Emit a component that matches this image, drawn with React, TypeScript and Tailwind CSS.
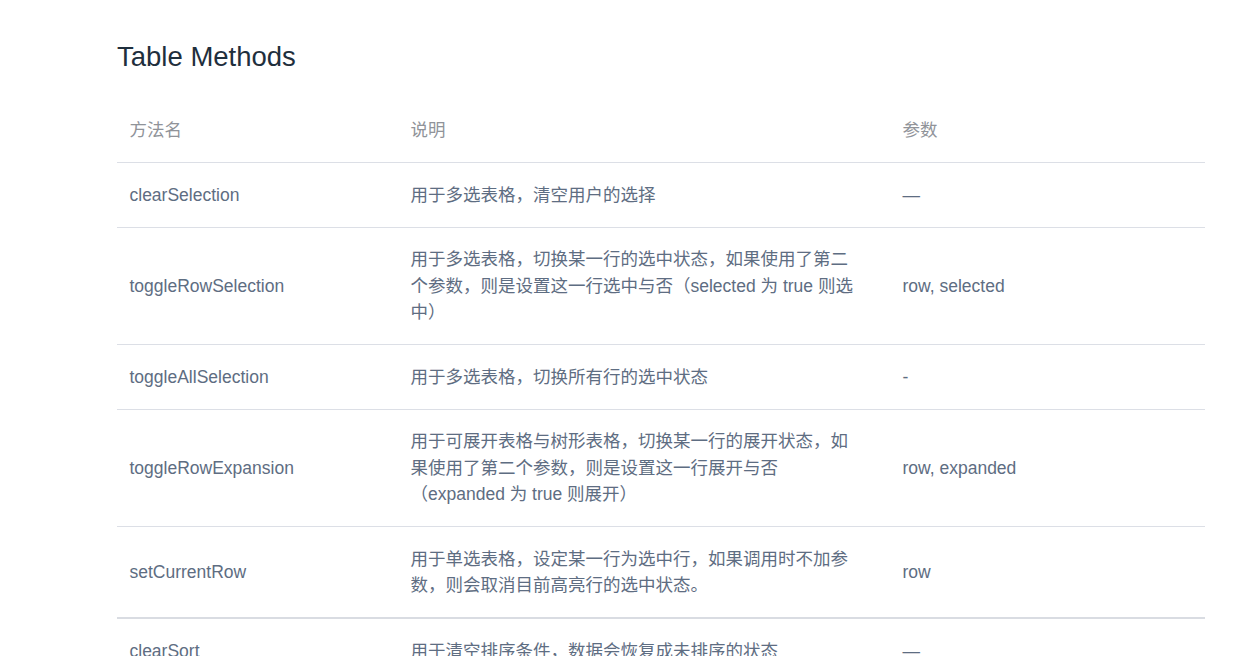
const rows = [
  { name: 'clearSelection', desc: '用于多选表格，清空用户的选择', params: '—' },
  {
    name: 'toggleRowSelection',
    desc: '用于多选表格，切换某一行的选中状态，如果使用了第二个参数，则是设置这一行选中与否（selected 为 true 则选中）',
    params: 'row, selected',
  },
  { name: 'toggleAllSelection', desc: '用于多选表格，切换所有行的选中状态', params: '-' },
  {
    name: 'toggleRowExpansion',
    desc: '用于可展开表格与树形表格，切换某一行的展开状态，如果使用了第二个参数，则是设置这一行展开与否（expanded 为 true 则展开）',
    params: 'row, expanded',
  },
  {
    name: 'setCurrentRow',
    desc: '用于单选表格，设定某一行为选中行，如果调用时不加参数，则会取消目前高亮行的选中状态。',
    params: 'row',
    thick: true,
  },
  { name: 'clearSort', desc: '用于清空排序条件，数据会恢复成未排序的状态', params: '—' },
  {
    name: 'clearFilter',
    desc: '不传入参数时用于清空所有过滤条件，数据会恢复成未过滤的状态，也可传入由columnKey组成的数组以清除指定列的过滤条件',
    params: 'columnKey',
  },
  { name: 'doLayout', desc: '对 Table 进行重新布局。当 Table 或其祖先元素由隐藏切换为显示时，可能需要调用此方法', params: '—' },
  { name: 'sort', desc: '手动对 Table 进行排序。参数prop属性指定排序列，order指定排序顺序。', params: 'prop: string, order: string' },
];

export default function App() {
  return (
    <div className="min-h-screen bg-white font-['Liberation_Sans','Noto_Sans_CJK_SC',sans-serif]">
      <div className="pl-[117px] pt-[36px]">
        <h3 className="text-[27.5px] leading-[41px] text-[#1f2f3d] font-normal">Table Methods</h3>

        <table className="mt-[21px] w-[1088px] table-fixed border-collapse text-[17.5px] leading-[26.25px]">
          <colgroup>
            <col className="w-[281px]" />
            <col className="w-[492px]" />
            <col className="w-[315px]" />
          </colgroup>
          <thead>
            <tr className="border-b border-[#dcdfe6]">
              <th className="px-[12.5px] py-[18.75px] text-left font-normal text-[#909399]">方法名</th>
              <th className="px-[12.5px] py-[18.75px] text-left font-normal text-[#909399]">说明</th>
              <th className="px-[12.5px] py-[18.75px] text-left font-normal text-[#909399]">参数</th>
            </tr>
          </thead>
          <tbody className="text-[#5e6d82]">
            {rows.map((r) => (
              <tr
                key={r.name}
                className={r.thick ? 'border-b-2 border-[#d9dce2]' : 'border-b border-[#dcdfe6]'}
              >
                <td className="px-[12.5px] py-[18.75px] align-middle">{r.name}</td>
                <td className="px-[12.5px] py-[18.75px] align-middle">
                  <div className="max-w-[446px]">{r.desc}</div>
                </td>
                <td className="px-[12.5px] py-[18.75px] align-middle">{r.params}</td>
              </tr>
            ))}
          </tbody>
        </table>
      </div>
    </div>
  );
}
